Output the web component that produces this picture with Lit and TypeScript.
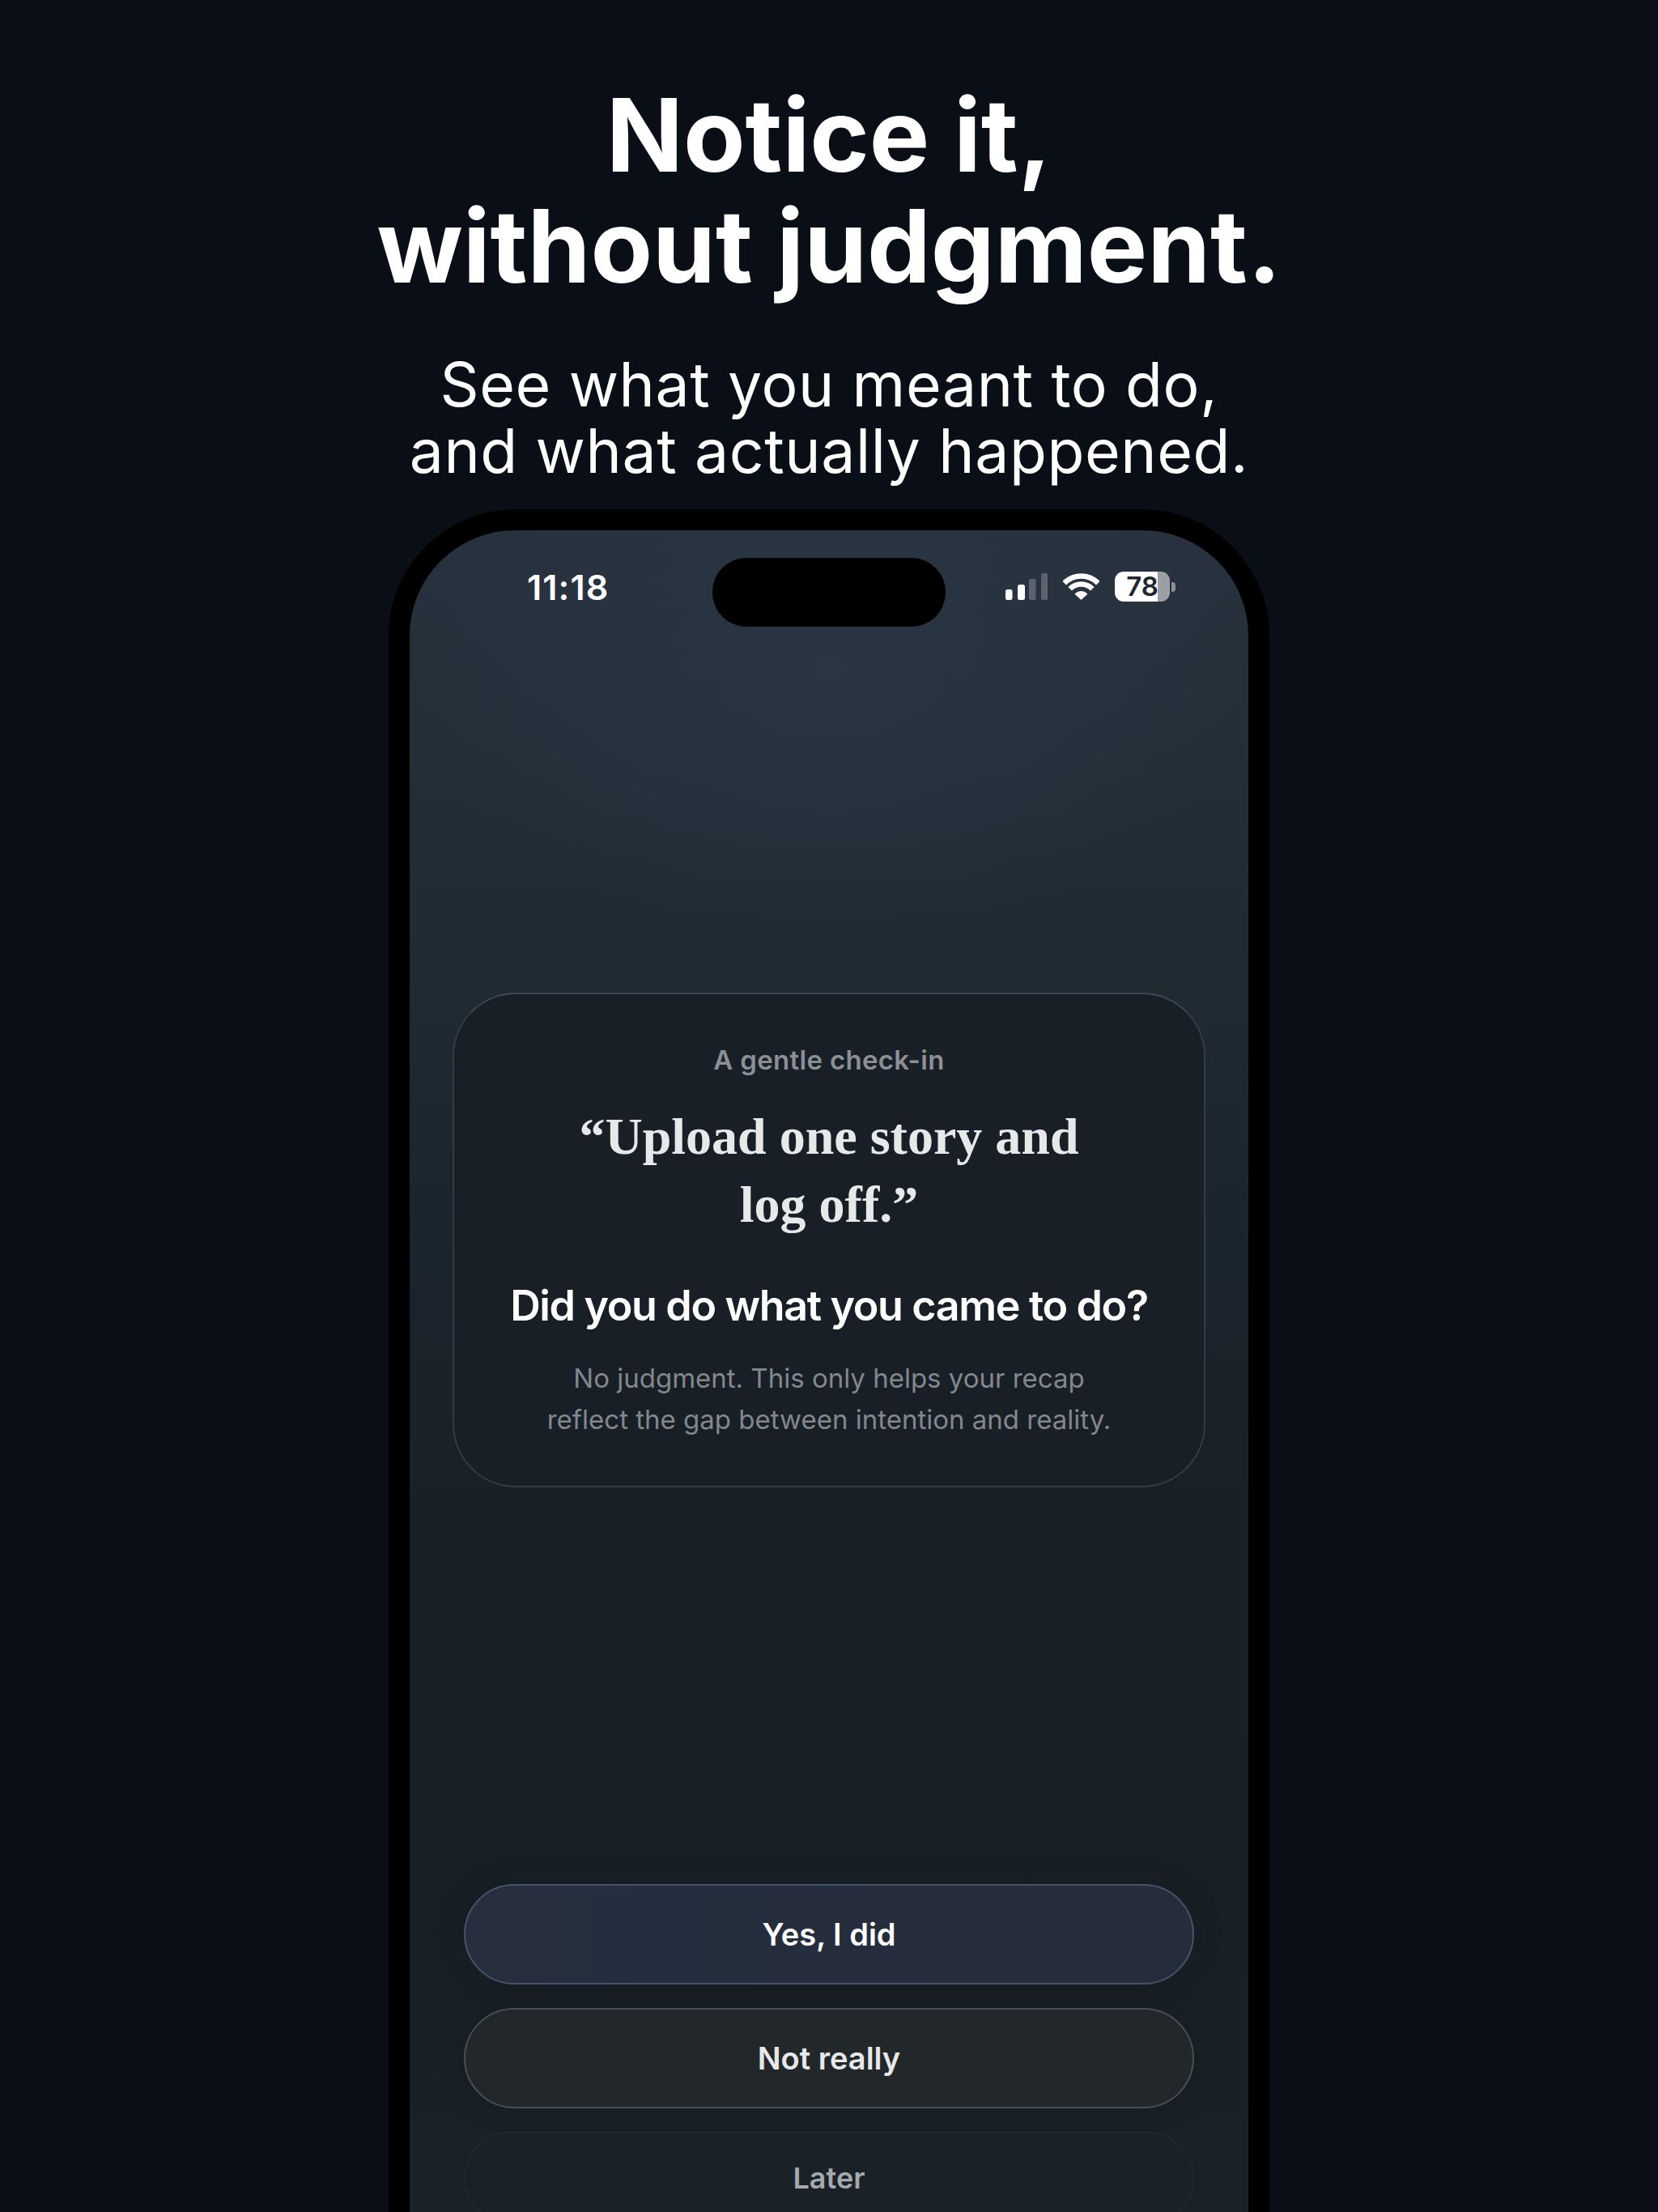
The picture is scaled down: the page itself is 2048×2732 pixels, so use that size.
import { LitElement, html, css } from "lit";
import { customElement } from "lit/decorators.js";

@customElement("app-root")
export class AppRoot extends LitElement {
  static styles = css`
    :host {
      display: block;
      width: 2048px;
      height: 2732px;
      overflow: hidden;
      background: #0a0f17;
      font-family: Inter, "Liberation Sans", sans-serif;
      color: #fff;
    }
    .page {
      display: flex;
      flex-direction: column;
      align-items: center;
      padding-top: 98px;
    }
    h1 {
      margin: 0;
      font-size: 125px;
      line-height: 137px;
      font-weight: 700;
      text-align: center;
    }
    .sub {
      margin: 62px 0 0;
      font-size: 75px;
      line-height: 82px;
      font-weight: 400;
      letter-spacing: 0.6px;
      text-align: center;
    }
    .phone {
      margin-top: 31px;
      width: 1088px;
      height: 2300px;
      box-sizing: border-box;
      flex: none;
      border: 26px solid #000;
      border-radius: 156px;
      background:
        radial-gradient(ellipse 520px 330px at 50% 170px, rgba(44, 56, 72, 0.7), rgba(44, 56, 72, 0) 100%),
        linear-gradient(180deg, #28323e 0, #232e38 300px, #1f2a33 560px, #1b252d 850px, #192128 1200px, #182026 1700px, #1a2229 2100px);
      overflow: hidden;
      display: flex;
      flex-direction: column;
      align-items: center;
      padding: 34px 56px 0;
    }
    .status {
      width: 1036px;
      flex: none;
      display: grid;
      grid-template-columns: 374px 288px 374px;
      height: 85px;
    }
    .side {
      display: flex;
      align-items: center;
      height: 71px;
    }
    .time {
      padding-left: 145px;
      font-size: 43px;
      font-weight: 600;
      letter-spacing: 1.1px;
      color: #fff;
    }
    .island {
      background: #000;
      border-radius: 42px;
      height: 85px;
    }
    .icons {
      padding-left: 74px;
      gap: 19px;
    }
    .signal {
      width: 52px;
      height: 33px;
      display: block;
    }
    .wifi {
      width: 45px;
      height: 35px;
      display: block;
    }
    .battery {
      display: flex;
      align-items: center;
      gap: 2px;
    }
    .cell {
      width: 68px;
      height: 37px;
      border-radius: 11px;
      background: linear-gradient(90deg, #fff 78%, #9b9ea3 78%);
      color: #1f2630;
      font-size: 33px;
      font-weight: 600;
      line-height: 37px;
      text-align: center;
    }
    .nub {
      width: 5px;
      height: 12px;
      border-radius: 0 4px 4px 0;
      background: #8b9096;
    }
    .card {
      margin-top: 452px;
      flex: none;
      width: 930px;
      height: 611px;
      box-sizing: border-box;
      border: 2px solid #323c48;
      border-top-color: #3b4757;
      border-radius: 78px;
      background: #181f26;
      padding-top: 59px;
      text-align: center;
    }
    .label {
      font-size: 33px;
      line-height: 44px;
      font-weight: 600;
      letter-spacing: 0.3px;
      color: #8b8f96;
    }
    .quote {
      margin-top: 31px;
      font-family: "Liberation Serif", serif;
      font-size: 64px;
      line-height: 84px;
      font-weight: 700;
      color: #e6e8ea;
    }
    .question {
      margin-top: 51px;
      font-size: 52px;
      line-height: 64px;
      font-weight: 600;
      letter-spacing: -1.35px;
      color: #fff;
    }
    .note {
      margin-top: 32px;
      font-size: 33px;
      line-height: 51px;
      color: #83878e;
    }
    .actions {
      margin-top: 490px;
      flex: none;
      width: 902px;
      display: flex;
      flex-direction: column;
      gap: 29px;
    }
    .btn {
      height: 124px;
      box-sizing: border-box;
      border-radius: 62px;
      border: 2px solid;
      display: flex;
      align-items: center;
      justify-content: center;
      font-size: 38px;
      font-weight: 600;
    }
    .yes {
      background: linear-gradient(90deg, #272f3e, #252e3e 25%, #262d3a);
      border-color: #46536a;
      color: #fff;
      box-shadow: 0 0 40px rgba(0, 0, 0, 0.14);
    }
    .no {
      background: #22272a;
      border-color: #474f57;
      color: #e6e8ea;
      box-shadow: 0 0 40px rgba(0, 0, 0, 0.14);
    }
    .later {
      height: 114px;
      border-radius: 57px;
      background: #1a2127;
      border-color: #20282e;
      color: #a6aaae;
      font-size: 36px;
      font-weight: 600;
    }
  `;

  render() {
    return html`
      <div class="page">
        <h1>Notice it,<br />without judgment.</h1>
        <p class="sub">See what you meant to do,<br />and what actually happened.</p>
        <div class="phone">
          <div class="status">
            <div class="side time">11:18</div>
            <div class="island"></div>
            <div class="side icons">
              <svg class="signal" viewBox="0 0 52 33">
                <rect x="0" y="20" width="8.5" height="13" rx="2.5" fill="#fff" />
                <rect x="15" y="14" width="9" height="19" rx="2.5" fill="#fff" />
                <rect x="29" y="7" width="8.5" height="26" rx="2.5" fill="#5c636c" />
                <rect x="44" y="0" width="8.5" height="33" rx="2.5" fill="#5c636c" />
              </svg>
              <svg class="wifi" viewBox="0 0 45 35">
                <path d="M1.6 13.1A29.5 29.5 0 0 1 43.4 13.1" fill="none" stroke="#fff" stroke-width="6.5" />
                <path d="M8.7 20.2A19.5 19.5 0 0 1 36.3 20.2" fill="none" stroke="#fff" stroke-width="6.5" />
                <path d="M22.5 33L15.6 26.6A10 10 0 0 1 29.4 26.6Z" fill="#fff" stroke="#fff" stroke-width="1.5" stroke-linejoin="round" />
              </svg>
              <div class="battery">
                <div class="cell">78</div>
                <div class="nub"></div>
              </div>
            </div>
          </div>
          <div class="card">
            <div class="label">A gentle check-in</div>
            <div class="quote">“Upload one story and<br />log off.”</div>
            <div class="question">Did you do what you came to do?</div>
            <div class="note">No judgment. This only helps your recap<br />reflect the gap between intention and reality.</div>
          </div>
          <div class="actions">
            <div class="btn yes">Yes, I did</div>
            <div class="btn no">Not really</div>
            <div class="btn later">Later</div>
          </div>
        </div>
      </div>
    `;
  }
}
